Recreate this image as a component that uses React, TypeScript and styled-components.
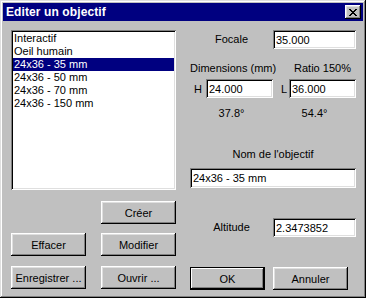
import * as React from "react";
import styled, { createGlobalStyle, css } from "styled-components";

const GlobalStyle = createGlobalStyle`
  html, body {
    margin: 0;
    padding: 0;
    background: #c0c0c0;
  }
  body {
    font-family: "Liberation Sans", Arial, sans-serif;
    font-size: 11px;
    color: #000;
  }
`;

const lenses = [
  "Interactif",
  "Oeil humain",
  "24x36 - 35 mm",
  "24x36 - 50 mm",
  "24x36 - 70 mm",
  "24x36 - 150 mm",
];

const raised = css`
  box-shadow: inset -1px -1px #000, inset 1px 1px #fff, inset -2px -2px #808080,
    inset 2px 2px #dfdfdf;
`;

const sunken = css`
  box-shadow: inset 1px 1px #808080, inset -1px -1px #fff, inset 2px 2px #000,
    inset -2px -2px #dfdfdf;
`;

function CloseGlyph() {
  // pixel X of the old title bar close box
  const rows = [
    "XX....XX",
    ".XX..XX.",
    "..XXXX..",
    "...XX...",
    "..XXXX..",
    ".XX..XX.",
    "XX....XX",
  ];
  const d = rows
    .flatMap((r, y) =>
      r.split("").map((c, x) => (c === "X" ? `M${x} ${y}h1v1h-1z` : ""))
    )
    .join("");
  return (
    <svg width="8" height="7" viewBox="0 0 8 7" shapeRendering="crispEdges">
      <path d={d} fill="#000" />
    </svg>
  );
}

export default function App() {
  const [selected, setSelected] = React.useState(2);
  const [name, setName] = React.useState(lenses[2]);

  return (
    <>
      <GlobalStyle />
      <Window>
        <TitleBar>
          <span>Editer un objectif</span>
          <CloseBox aria-label="Fermer">
            <CloseGlyph />
          </CloseBox>
        </TitleBar>
        <Body>
          <LeftCol>
            <ListBox>
              {lenses.map((l, i) => (
                <ListItem
                  key={l}
                  $active={i === selected}
                  onClick={() => {
                    setSelected(i);
                    setName(l);
                  }}
                >
                  {l}
                </ListItem>
              ))}
            </ListBox>
            <ButtonRow $top={11}>
              <Spacer />
              <Button>Créer</Button>
            </ButtonRow>
            <ButtonRow $top={9}>
              <Button>Effacer</Button>
              <Button>Modifier</Button>
            </ButtonRow>
            <ButtonRow $top={10}>
              <Button>Enregistrer ...</Button>
              <Button>Ouvrir ...</Button>
            </ButtonRow>
          </LeftCol>

          <RightCol>
            <FieldRow>
              <Label>Focale</Label>
              <Field defaultValue="35.000" />
            </FieldRow>

            <PairGrid $top={13}>
              <Caption $span="1 / 3">Dimensions (mm)</Caption>
              <Caption $span="4 / 5">Ratio 150%</Caption>
            </PairGrid>
            <PairGrid $top={4}>
              <Letter>H</Letter>
              <Field defaultValue="24.000" />
              <Letter $right>L</Letter>
              <Field defaultValue="36.000" />
            </PairGrid>
            <PairGrid $top={9}>
              <Caption $span="1 / 3">37.8°</Caption>
              <Caption $span="3 / 5">54.4°</Caption>
            </PairGrid>

            <Heading>Nom de l'objectif</Heading>
            <WideField value={name} onChange={(e) => setName(e.target.value)} />

            <FieldRow $top={30}>
              <Label>Altitude</Label>
              <Field defaultValue="2.3473852" />
            </FieldRow>

            <FieldRow $top={30}>
              <Button $default>OK</Button>
              <Button>Annuler</Button>
            </FieldRow>
          </RightCol>
        </Body>
      </Window>
    </>
  );
}

const Window = styled.div`
  width: 366px;
  height: 298px;
  box-sizing: border-box;
  padding: 3px;
  background: #c0c0c0;
  box-shadow: inset -1px -1px #000, inset 1px 1px #dfdfdf,
    inset -2px -2px #808080, inset 2px 2px #fff;
  display: flex;
  flex-direction: column;
`;

const TitleBar = styled.div`
  height: 18px;
  background: #000080;
  color: #fff;
  display: flex;
  align-items: center;
  justify-content: space-between;
  padding: 0 2px 0 3px;
  font-weight: bold;
  font-size: 12px;
  letter-spacing: 0.1px;
`;

const CloseBox = styled.button`
  width: 16px;
  height: 14px;
  padding: 0;
  border: none;
  background: #c0c0c0;
  ${raised};
  display: flex;
  align-items: center;
  justify-content: center;
  svg {
    margin-left: -1px;
  }
`;

const Body = styled.div`
  display: flex;
  gap: 14px;
  padding: 9px 0 0 8px;
`;

const LeftCol = styled.div`
  width: 165px;
  display: flex;
  flex-direction: column;
`;

const ListBox = styled.div`
  height: 160px;
  box-sizing: border-box;
  padding: 2px;
  background: #fff;
  ${sunken};
  display: flex;
  flex-direction: column;
`;

const ListItem = styled.div<{ $active?: boolean }>`
  height: 13px;
  line-height: 13px;
  padding-left: 1px;
  white-space: nowrap;
  cursor: default;
  background: ${(p) => (p.$active ? "#000080" : "transparent")};
  color: ${(p) => (p.$active ? "#fff" : "#000")};
`;

const ButtonRow = styled.div<{ $top: number }>`
  display: grid;
  grid-template-columns: 75px 75px;
  column-gap: 15px;
  margin-top: ${(p) => p.$top}px;
`;

const Spacer = styled.div``;

const Button = styled.button<{ $default?: boolean }>`
  width: 75px;
  height: 23px;
  padding: 0;
  margin: 0;
  box-sizing: border-box;
  background: #c0c0c0;
  font-family: "Liberation Sans", Arial, sans-serif;
  font-size: 11px;
  color: #000;
  border: none;
  ${(p) =>
    p.$default
      ? css`
          border: 1px solid #000;
          box-shadow: inset -1px -1px #000, inset 1px 1px #fff,
            inset -2px -2px #808080;
        `
      : raised};
`;

const RightCol = styled.div`
  width: 166px;
  display: flex;
  flex-direction: column;
`;

const FieldRow = styled.div<{ $top?: number }>`
  display: grid;
  grid-template-columns: 83px 83px;
  align-items: center;
  margin-top: ${(p) => p.$top ?? 0}px;
`;

const Label = styled.div`
  text-align: center;
  line-height: 13px;
`;

const Field = styled.input`
  height: 19px;
  width: 100%;
  box-sizing: border-box;
  border: none;
  padding: 0 0 0 3px;
  background: #fff;
  ${sunken};
  font-family: "Liberation Sans", Arial, sans-serif;
  font-size: 11px;
  color: #000;
  outline: none;
`;

const PairGrid = styled.div<{ $top: number }>`
  display: grid;
  grid-template-columns: 16px 67px 16px 67px;
  align-items: center;
  margin-top: ${(p) => p.$top}px;
`;

const Caption = styled.div<{ $span: string }>`
  grid-column: ${(p) => p.$span};
  text-align: center;
  line-height: 13px;
  white-space: nowrap;
`;

const Letter = styled.div<{ $right?: boolean }>`
  text-align: ${(p) => (p.$right ? "right" : "center")};
  padding-right: ${(p) => (p.$right ? 2 : 0)}px;
`;

const Heading = styled.div`
  margin-top: 28px;
  text-align: center;
  line-height: 13px;
`;

const WideField = styled(Field)`
  margin-top: 7px;
  height: 20px;
`;
